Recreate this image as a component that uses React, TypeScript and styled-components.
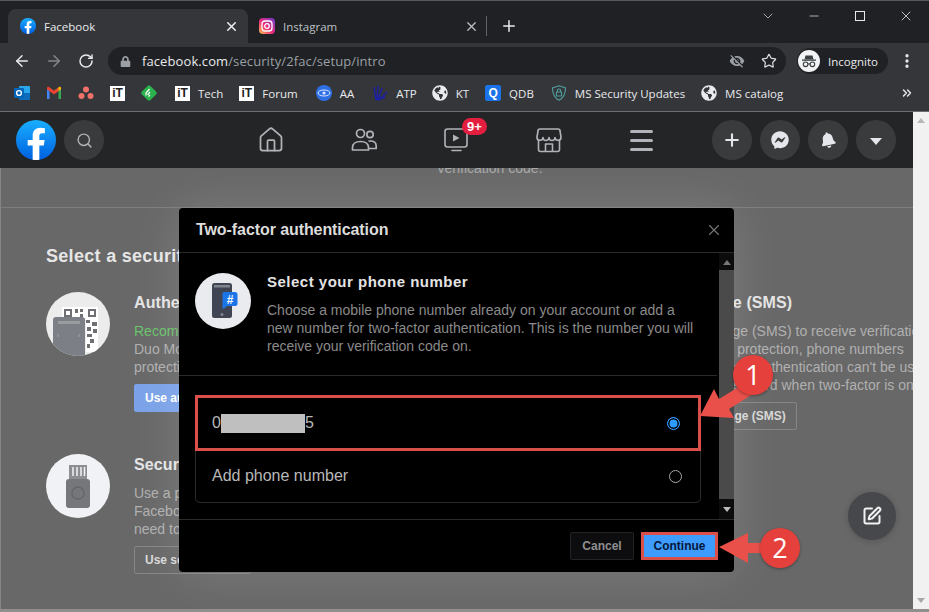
import React from 'react'
import styled, { createGlobalStyle } from 'styled-components'
import {
  ArrowLeft,
  ArrowRight,
  ChevronDown,
  ChevronsRight,
  EllipsisVertical,
  House,
  Minus,
  Plus,
  RotateCw,
  Search,
  SquarePen,
  Star,
  X,
} from 'lucide-react'
import { FaBell, FaFacebookMessenger, FaGlobeAmericas, FaLock } from 'react-icons/fa'
import { MdVisibilityOff } from 'react-icons/md'

const Global = createGlobalStyle`
  html, body {
    margin: 0;
    padding: 0;
    background: #8a8a8a;
  }
  * {
    box-sizing: border-box;
  }
`

const uiFont = `"Open Sans", "Noto Sans", sans-serif`
const pageFont = `"Liberation Sans", Arial, sans-serif`

const FbLogo: React.FC<{ size: number }> = ({ size }) => (
  <svg width={size} height={size} viewBox="0 0 36 36">
    <defs>
      <linearGradient id={`fb${size}`} x1="50%" x2="50%" y1="97%" y2="0%">
        <stop offset="0%" stopColor="#0062e0" />
        <stop offset="100%" stopColor="#19afff" />
      </linearGradient>
    </defs>
    <circle cx="18" cy="18" r="18" fill={`url(#fb${size})`} />
    <path
      fill="#fff"
      d="M25 23l.8-5H21v-3.500c0-1.400.5-2.500 2.700-2.500H26V7.400c-1.300-.2-2.700-.4-4-.4-4.100 0-7 2.500-7 7v4h-4.500v5H15v12.700c1 .2 2 .3 3 .3s2-.1 3-.3V23h4z"
    />
  </svg>
)

const InstaLogo = () => (
  <svg width="16" height="16" viewBox="0 0 16 16">
    <defs>
      <linearGradient id="ig" x1="0" y1="1" x2="1" y2="0">
        <stop offset="0%" stopColor="#fdc04e" />
        <stop offset="45%" stopColor="#ee2a7b" />
        <stop offset="100%" stopColor="#6a3bd0" />
      </linearGradient>
    </defs>
    <rect width="16" height="16" rx="4" fill="url(#ig)" />
    <rect x="3" y="3" width="10" height="10" rx="3" fill="none" stroke="#fff" strokeWidth="1.300" />
    <circle cx="8" cy="8" r="2.300" fill="none" stroke="#fff" strokeWidth="1.300" />
  </svg>
)

const OutlookIcon = () => (
  <svg width="16" height="16" viewBox="0 0 16 16">
    <rect x="5" y="1" width="11" height="14" rx="1" fill="#28a8ea" />
    <rect x="5" y="8" width="11" height="7" fill="#0f6cbd" />
    <rect x="0" y="3" width="10" height="10" rx="1" fill="#0364b8" />
    <circle cx="5" cy="8" r="2.400" fill="none" stroke="#fff" strokeWidth="1.400" />
  </svg>
)

const GmailIcon = () => (
  <svg width="16" height="16" viewBox="0 0 16 16">
    <path d="M1 14V4l2.500 2v8z" fill="#4285f4" />
    <path d="M12.500 14V6L15 4v10z" fill="#34a853" />
    <path d="M1 4.500V3c0-1 1.300-1.600 2-1l4.500 3.500v2.800z" fill="#ea4335" />
    <path d="M15 4.500V3c0-1-1.300-1.600-2-1L8.500 5.500v2.800z" fill="#fbbc04" />
    <path d="M3.500 2.400L8 6l4.500-3.600v3.500L8 9.500 3.500 5.900z" fill="#ea4335" />
  </svg>
)

const AsanaIcon = () => (
  <svg width="16" height="16" viewBox="0 0 16 16" fill="#f0706a">
    <circle cx="8" cy="4.500" r="3" />
    <circle cx="3.500" cy="11" r="3" />
    <circle cx="12.500" cy="11" r="3" />
  </svg>
)

const FeedlyIcon = () => (
  <svg width="16" height="16" viewBox="0 0 16 16">
    <rect x="2" y="2" width="12" height="12" rx="2" fill="#2bb24c" transform="rotate(45 8 8)" />
    <path d="M8.500 4L5 8v2.500M9 7L6.500 9.800M9 10L7.500 11.500" stroke="#fff" strokeWidth="1.200" fill="none" />
  </svg>
)

const EyeBadge = () => (
  <svg width="16" height="16" viewBox="0 0 16 16">
    <circle cx="8" cy="8" r="8" fill="#2f6fe4" />
    <ellipse cx="8" cy="8" rx="6" ry="3" fill="none" stroke="#d8e6ff" strokeWidth="1" />
    <circle cx="8" cy="8" r="1.600" fill="#d8e6ff" />
  </svg>
)

const AtpIcon = () => (
  <svg width="16" height="16" viewBox="0 0 16 16" stroke="#1a1fa8" strokeWidth="1.400" fill="none">
    <path d="M4 15L2 2M5 15L6 1M6 15L10 3M7 15L15 7M5 15C8 14 11 13 13 12" />
  </svg>
)

const ShieldIcon = () => (
  <svg width="16" height="16" viewBox="0 0 16 16" fill="none" stroke="#4f9f9b" strokeWidth="1.100">
    <path d="M8 .8l6.500 2.200c0 6-1.500 9.800-6.500 12.200C3 12.800 1.500 9 1.500 3z" />
    <rect x="5.400" y="7" width="5.200" height="4" rx=".6" />
    <path d="M6.400 7V5.600a1.600 1.600 0 013.200 0V7" />
  </svg>
)

const IncognitoIcon = () => (
  <svg width="22" height="22" viewBox="0 0 22 22">
    <circle cx="11" cy="11" r="11" fill="#f1f3f4" />
    <path d="M7.500 5.500h7l1 4h-9z" fill="#3c4043" />
    <rect x="4" y="9.500" width="14" height="1.300" fill="#3c4043" />
    <circle cx="7.600" cy="14.300" r="2.300" fill="none" stroke="#3c4043" strokeWidth="1.100" />
    <circle cx="14.400" cy="14.300" r="2.300" fill="none" stroke="#3c4043" strokeWidth="1.100" />
    <path d="M9.900 14h2.200" stroke="#3c4043" strokeWidth="1.100" />
  </svg>
)

const FriendsIcon = () => (
  <svg width="28" height="28" viewBox="0 0 28 28" fill="none" stroke="#b0b3b8" strokeWidth="1.700">
    <circle cx="10.500" cy="7.500" r="4" />
    <circle cx="20" cy="8.500" r="3.200" />
    <path d="M2.500 24v-2.500c0-3.500 3-6 8-6s8 2.500 8 6V24z" strokeLinejoin="round" />
    <path d="M18.500 15.200c.5-.2 1-.2 1.700-.2 3.800 0 6 2 6 5v2.500h-7.500" strokeLinejoin="round" />
  </svg>
)

const WatchIcon = () => (
  <svg width="28" height="28" viewBox="0 0 28 28" fill="none" stroke="#b0b3b8" strokeWidth="1.600">
    <rect x="3" y="3" width="22" height="18" rx="2.500" />
    <path d="M10 24.500h9" strokeLinecap="round" />
    <path d="M11 8.500l6.500 3.500-6.500 3.500z" fill="#b0b3b8" stroke="none" />
  </svg>
)

const MarketIcon = () => (
  <svg width="28" height="28" viewBox="0 0 28 28" fill="none" stroke="#b0b3b8" strokeWidth="1.600" strokeLinejoin="round">
    <path d="M5 3h18a2 2 0 012 2l1 6a3 3 0 01-6 .5 3 3 0 01-6 0 3 3 0 01-6 0 3 3 0 01-6-.5l1-6a2 2 0 012-2z" />
    <path d="M3.500 14v9.500a2 2 0 002 2h17a2 2 0 002-2V14" />
    <path d="M10.500 25.500V18h7v7.500" />
  </svg>
)

const QrIcon = () => (
  <svg width="64" height="64" viewBox="0 0 64 64">
    <defs>
      <clipPath id="qrClip">
        <circle cx="32" cy="32" r="32" />
      </clipPath>
    </defs>
    <circle cx="32" cy="32" r="32" fill="#ececec" />
    <g clipPath="url(#qrClip)">
      <rect x="16" y="15" width="36" height="11" fill="#fff" />
      <rect x="40" y="25" width="12" height="35" fill="#fff" />
      <path
        fillRule="evenodd"
        fill="#6d6f73"
        d="M18 17h8v8h-8zM20 19v4h4v-4zM42 17h8v8h-8zM44 19v4h4v-4zM29 17h3v4h-3zM34 17h3v3h-3zM34 22h3v4h-3zM40 28h4v3h-4zM46 30h5v4h-5zM41 35h4v4h-4zM47 37h4v4h-4zM41 42h5v3h-5zM44 47h4v4h-4zM41 52h3v4h-3z"
      />
      <rect x="7" y="25" width="32" height="42" rx="3" fill="#7c7f85" />
      <rect x="12" y="29" width="22" height="3" fill="#9a9ca0" />
      <path d="M12 42v3M33 42v3" stroke="#9a9ca0" strokeWidth="1.200" />
    </g>
  </svg>
)

const UsbIcon = () => (
  <svg width="64" height="64" viewBox="0 0 64 64">
    <circle cx="32" cy="32" r="32" fill="#f0f2f5" />
    <rect x="23" y="11" width="18" height="14" fill="#8c8e92" />
    <path d="M27 13v9M31 13v9M35 13v9M38.500 13v9" stroke="#f0f2f5" strokeWidth="1.500" />
    <rect x="20" y="25" width="24" height="29" rx="3" fill="#75777b" />
    <circle cx="32" cy="39" r="6" fill="none" stroke="#65676b" strokeWidth="1.500" />
  </svg>
)

const PhoneIcon = () => (
  <svg width="56" height="56" viewBox="0 0 56 56">
    <circle cx="28" cy="28" r="28" fill="#e9ebee" />
    <rect x="17" y="10" width="20" height="35" rx="2.500" fill="#3f4552" />
    <rect x="19" y="12" width="16" height="2.500" fill="#80848c" />
    <circle cx="27" cy="41.500" r="1.500" fill="#80848c" />
    <path
      d="M29 19h11a2.500 2.500 0 012.500 2.500v9a2.500 2.500 0 01-2.500 2.500H32l-3 2.500c-1 .8-1.500 0-1.500-1V20.500A1.500 1.500 0 0129 19z"
      fill="#1b74e8"
    />
    <text x="35" y="31" textAnchor="middle" fontSize="12" fontWeight="700" fontFamily={pageFont} fill="#fff">
      #
    </text>
  </svg>
)

const Window = styled.div`
  position: relative;
  width: 929px;
  height: 612px;
  overflow: hidden;
  display: flex;
  flex-direction: column;
  background: #202124;
  border-top: 1px solid #5a5a5a;
`

const TitleBar = styled.div`
  height: 42px;
  flex: none;
  display: flex;
  padding-left: 8px;
  color: #e8eaed;
  background: #202124;
`

const Tab = styled.div<{ $active?: boolean }>`
  width: 240px;
  height: 34px;
  margin-top: 8px;
  padding: 0 9px 0 ${(p) => (p.$active ? 12 : 11)}px;
  border-radius: 8px 8px 0 0;
  display: flex;
  align-items: center;
  gap: 8px;
  background: ${(p) => (p.$active ? '#35363a' : 'transparent')};
  color: ${(p) => (p.$active ? '#e8eaed' : '#bdc1c6')};
`

const TabTitle = styled.span`
  flex: 1;
  font: 11.5px ${uiFont};
`

const TabDivider = styled.div`
  width: 1px;
  height: 20px;
  margin: 15px 0 0 -2px;
  background: #5f6368;
`

const NewTab = styled.div`
  width: 44px;
  height: 34px;
  margin-top: 8px;
  display: flex;
  align-items: center;
  justify-content: center;
`

const WindowControls = styled.div`
  margin-left: auto;
  height: 29px;
  display: flex;
  color: #e8eaed;
`

const WindowButton = styled.div`
  width: 46px;
  display: flex;
  align-items: center;
  justify-content: center;
`

const MaximizeBox = styled.span`
  width: 10px;
  height: 10px;
  border: 1px solid #e8eaed;
`

const Toolbar = styled.div`
  height: 32px;
  flex: none;
  display: flex;
  align-items: flex-end;
  background: #35363a;
  padding-left: 6px;
`

const NavButton = styled.div<{ $dim?: boolean }>`
  width: 32px;
  height: 28px;
  display: flex;
  align-items: center;
  justify-content: center;
  color: ${(p) => (p.$dim ? '#85878b' : '#e8eaed')};
`

const Omnibox = styled.div`
  width: 678px;
  height: 28px;
  margin-left: 6px;
  padding: 0 9px 0 12px;
  border-radius: 14px;
  background: #202124;
  display: flex;
  align-items: center;
  color: #9aa0a6;
`

const Url = styled.span`
  margin-left: 11px;
  flex: 1;
  font: 13px ${uiFont};
  color: #9aa0a6;
  letter-spacing: 0.1px;
`

const UrlHost = styled.span`
  color: #e8eaed;
`

const TrackingOff = styled(MdVisibilityOff)`
  margin-right: 16px;
`

const ProfilePill = styled.div`
  width: 91px;
  height: 26px;
  margin: 0 0 1px 11px;
  padding-left: 1px;
  border-radius: 13px;
  background: #202124;
  display: flex;
  align-items: center;
  gap: 8px;
  font: 11.5px ${uiFont};
  color: #e8eaed;
`

const Kebab = styled.div`
  width: 20px;
  height: 28px;
  margin-left: 9px;
  display: flex;
  align-items: center;
  justify-content: center;
  color: #e8eaed;
`

const BookmarksBar = styled.div`
  height: 37px;
  flex: none;
  display: flex;
  align-items: center;
  padding: 0 6px;
  background: #35363a;
  border-bottom: 1px solid #6b6d70;
`

const Bookmark = styled.div<{ $gap?: number }>`
  display: flex;
  align-items: center;
  gap: 8px;
  padding: 0 8px;
  margin-right: ${(p) => p.$gap ?? 0}px;
  font: 11.5px ${uiFont};
  color: #e8eaed;
`

const ItBadge = styled.span`
  width: 15px;
  height: 15px;
  background: #fff;
  color: #222;
  font: 700 12px/15px ${pageFont};
  text-align: center;
`

const QBadge = styled.span`
  width: 16px;
  height: 16px;
  border-radius: 2px;
  background: #1a73e8;
  color: #fff;
  font: 700 12px/16px ${pageFont};
  text-align: center;
`

const OverflowMark = styled.div`
  margin-left: auto;
  margin-right: 9px;
  display: flex;
  color: #e8eaed;
`

const Main = styled.div`
  flex: 1;
  min-height: 0;
  display: flex;
  padding-bottom: 3px;
  background: #8f8f8f;
`

const Viewport = styled.div`
  position: relative;
  width: 913px;
  display: flex;
  flex-direction: column;
  font-family: ${pageFont};
  overflow: hidden;
`

const FbNav = styled.nav`
  height: 56px;
  flex: none;
  display: flex;
  align-items: center;
  padding-left: 16px;
  background: #242526;
`

const NavCircle = styled.div`
  width: 40px;
  height: 40px;
  border-radius: 50%;
  background: #3a3b3c;
  display: flex;
  align-items: center;
  justify-content: center;
  color: #e4e6eb;
`

const SearchCircle = styled(NavCircle)`
  margin-left: 8px;
  color: #b0b3b8;
`

const TiltedBell = styled(FaBell)`
  transform: rotate(-12deg);
`

const NavCenter = styled.div`
  display: flex;
  margin-left: 121px;
`

const NavItem = styled.div`
  position: relative;
  width: 92.5px;
  display: flex;
  align-items: center;
  justify-content: center;
  color: #b0b3b8;
`

const Badge = styled.span`
  position: absolute;
  left: 52px;
  top: -8px;
  height: 17px;
  padding: 0 5px;
  border-radius: 9px;
  background: #e41e3f;
  color: #fff;
  font: 700 13px/17px ${pageFont};
`

const Hamburger = styled.div`
  width: 23px;
  display: flex;
  flex-direction: column;
  gap: 6px;
`

const HamburgerBar = styled.span`
  height: 3px;
  border-radius: 2px;
  background: #b0b3b8;
`

const NavRight = styled.div`
  margin-left: auto;
  margin-right: 17px;
  display: flex;
  gap: 8px;
`

const CaretDown = styled.span`
  width: 0;
  height: 0;
  margin-top: 3px;
  border-left: 6px solid transparent;
  border-right: 6px solid transparent;
  border-top: 7px solid #e4e6eb;
`

const PageBody = styled.div`
  flex: 1;
  background: #686868;
  border-left: 1px solid #858585;
  overflow: hidden;
  min-height: 0;
`

const CutOffText = styled.div`
  height: 49px;
  margin-top: -9px;
  padding-left: 66px;
  text-align: center;
  font-size: 14px;
  line-height: 18px;
  color: #a8a8a8;
  border-bottom: 1px solid #7d7d7d;
`

const MethodsHeading = styled.h2`
  margin: 38px 0 26px 45px;
  font-size: 18px;
  line-height: 20px;
  font-weight: 700;
  letter-spacing: 0.3px;
  color: #e6e6e6;
`

const Methods = styled.div`
  display: grid;
  grid-template-columns: 502px 400px;
  grid-auto-rows: 162px;
  padding-left: 45px;
`

const Method = styled.div`
  display: flex;
  gap: 24px;
`

const MethodIcon = styled.div`
  width: 64px;
  height: 64px;
  flex: none;
`

const MethodText = styled.div`
  padding-top: 1px;
  display: flex;
  flex-direction: column;
  align-items: flex-start;
  white-space: nowrap;
  font-size: 14px;
  line-height: 18px;
  color: #b0b0b0;
`

const MethodTitle = styled.div`
  margin-bottom: 9px;
  font-size: 16px;
  line-height: 20px;
  font-weight: 700;
  letter-spacing: 0.1px;
  color: #e4e4e4;
`

const Recommended = styled.div`
  color: #6ac46a;
`

const MethodButton = styled.div<{ $primary?: boolean }>`
  margin-top: 8px;
  height: 28px;
  padding: 0 10px;
  border-radius: 2px;
  font-size: 12px;
  line-height: 26px;
  font-weight: 700;
  border: 1px solid ${(p) => (p.$primary ? '#7ba2e8' : '#858585')};
  background: ${(p) => (p.$primary ? '#7ba2e8' : 'transparent')};
  color: ${(p) => (p.$primary ? '#fff' : '#d8d8d8')};
`

const Modal = styled.div`
  position: absolute;
  left: 179px;
  top: 96px;
  width: 555px;
  height: 364px;
  display: flex;
  flex-direction: column;
  background: #000;
  border-radius: 4px;
  box-shadow: 0 0 50px rgba(255, 255, 255, 0.14);
`

const ModalHeader = styled.div`
  height: 45px;
  flex: none;
  padding: 0 11px 0 17px;
  display: flex;
  align-items: center;
  justify-content: space-between;
  font-size: 16px;
  font-weight: 700;
  letter-spacing: -0.08px;
  color: #dcdcdc;
  border-bottom: 1px solid #2b2b2b;
`

const CloseButton = styled.div`
  display: flex;
  color: #777;
`

const ModalScroll = styled.div`
  flex: 1;
  min-height: 0;
  display: flex;
`

const ModalContent = styled.div`
  width: 540px;
  flex: none;
`

const Intro = styled.div`
  height: 123px;
  margin-right: 2px;
  padding: 20px 0 0 16px;
  display: flex;
  gap: 16px;
  border-bottom: 1px solid #2b2b2b;
`

const IntroTitle = styled.div`
  margin: 0 0 10px;
  font-size: 15px;
  line-height: 18px;
  font-weight: 700;
  letter-spacing: 0.5px;
  color: #e4e4e4;
`

const IntroText = styled.div`
  width: 430px;
  font-size: 14px;
  line-height: 18px;
  color: #8a8a8a;
`

const Options = styled.div`
  width: 506px;
  margin: 19px 0 0 16px;
  border: 1px solid #2b2b2b;
  border-radius: 5px;
`

const Option = styled.div<{ $marked?: boolean }>`
  height: ${(p) => (p.$marked ? 56 : 52)}px;
  margin: ${(p) => (p.$marked ? '-1px' : '0')};
  padding: 0 18px 0 ${(p) => (p.$marked ? 14 : 16)}px;
  display: flex;
  align-items: center;
  justify-content: space-between;
  font-size: 16px;
  color: #b8b8b8;
  border: ${(p) => (p.$marked ? '3px solid #d9504a' : 'none')};
`

const Number = styled.span`
  display: flex;
  align-items: center;
`

const Masked = styled.span`
  width: 84px;
  height: 19px;
  background: #bfbfbf;
`

const Radio = styled.span<{ $on?: boolean }>`
  width: 13px;
  height: 13px;
  border-radius: 50%;
  border: 1.500px solid ${(p) => (p.$on ? '#2d9bff' : '#a8a8a8')};
  background: ${(p) => (p.$on ? '#2d9bff' : 'transparent')};
  box-shadow: ${(p) => (p.$on ? 'inset 0 0 0 1.5px #000' : 'none')};
`

const Track = styled.div`
  width: 15px;
  display: flex;
  flex-direction: column;
  align-items: center;
  justify-content: space-between;
  background: #0c0c0c;
  padding: 7px 0;
`

const Thumb = styled.div`
  width: 15px;
  flex: 1;
  margin: 5px 0 8px;
  background: #4a4a4a;
`

const Arrow = styled.span<{ $down?: boolean }>`
  width: 0;
  height: 0;
  border-left: 4px solid transparent;
  border-right: 4px solid transparent;
  ${(p) => (p.$down ? 'border-top: 5px solid #bbb;' : 'border-bottom: 5px solid #777;')}
`

const ScrollArrow = styled.span<{ $down?: boolean }>`
  width: 0;
  height: 0;
  border-left: 4px solid transparent;
  border-right: 4px solid transparent;
  ${(p) => (p.$down ? 'border-top: 5px solid #a8a8a8;' : 'border-bottom: 5px solid #b8b8b8;')}
`

const ModalFooter = styled.div`
  height: 53px;
  flex: none;
  padding-right: 16px;
  display: flex;
  align-items: center;
  justify-content: flex-end;
  gap: 7px;
  border-top: 1px solid #2b2b2b;
`

const CancelButton = styled.div`
  width: 64px;
  height: 28px;
  border: 1px solid #222;
  border-radius: 2px;
  background: #0d0d0f;
  text-align: center;
  font-size: 12px;
  line-height: 26px;
  font-weight: 700;
  color: #8f8f8f;
`

const ContinueButton = styled.div`
  width: 77px;
  height: 28px;
  border: 3px solid #d9504a;
  background: #3f9cff;
  text-align: center;
  font-size: 12px;
  line-height: 22px;
  font-weight: 700;
  color: #06163a;
`

const Fab = styled.div`
  position: absolute;
  left: 848px;
  top: 380px;
  width: 48px;
  height: 48px;
  border-radius: 50%;
  background: #46484b;
  box-shadow: 0 1px 6px rgba(0, 0, 0, 0.2);
  display: flex;
  align-items: center;
  justify-content: center;
  color: #f2f2f2;
`

const Scrollbar = styled.div`
  flex: 1;
  display: flex;
  flex-direction: column;
  align-items: center;
  justify-content: space-between;
  padding: 6px 0;
  background: #f1f1f1;
`

const ArrowOverlay = styled.svg`
  position: absolute;
  left: 0;
  top: 0;
`

const Callout = styled.div<{ $x: number; $y: number }>`
  position: absolute;
  left: ${(p) => p.$x - 20}px;
  top: ${(p) => p.$y - 21}px;
  width: 40px;
  height: 40px;
  border-radius: 50%;
  background: #e5403c;
  box-shadow: 0 1px 3px rgba(0, 0, 0, 0.35);
  color: #fff;
  text-align: center;
  font: 27px/40px ${uiFont};
`

const App: React.FC = () => {
  return (
    <>
      <Global />
      <Window>
        <TitleBar>
          <Tab $active>
            <FbLogo size={16} />
            <TabTitle>Facebook</TabTitle>
            <X size={15} strokeWidth={2.5} />
          </Tab>
          <Tab>
            <InstaLogo />
            <TabTitle>Instagram</TabTitle>
            <X size={15} strokeWidth={2} />
          </Tab>
          <TabDivider />
          <NewTab>
            <Plus size={18} strokeWidth={2} />
          </NewTab>
          <WindowControls>
            <WindowButton>
              <ChevronDown size={16} strokeWidth={1} />
            </WindowButton>
            <WindowButton>
              <Minus size={14} strokeWidth={1.2} />
            </WindowButton>
            <WindowButton>
              <MaximizeBox />
            </WindowButton>
            <WindowButton>
              <X size={16} strokeWidth={1.2} />
            </WindowButton>
          </WindowControls>
        </TitleBar>

        <Toolbar>
          <NavButton>
            <ArrowLeft size={18} strokeWidth={2} />
          </NavButton>
          <NavButton $dim>
            <ArrowRight size={18} strokeWidth={2} />
          </NavButton>
          <NavButton>
            <RotateCw size={16} strokeWidth={2.2} />
          </NavButton>
          <Omnibox>
            <FaLock size={11} />
            <Url>
              <UrlHost>facebook.com</UrlHost>/security/2fac/setup/intro
            </Url>
            <TrackingOff size={16} />
            <Star size={16} strokeWidth={1.8} color="#dadce0" />
          </Omnibox>
          <ProfilePill>
            <IncognitoIcon />
            Incognito
          </ProfilePill>
          <Kebab>
            <EllipsisVertical size={18} strokeWidth={2.4} />
          </Kebab>
        </Toolbar>

        <BookmarksBar>
          <Bookmark>
            <OutlookIcon />
          </Bookmark>
          <Bookmark>
            <GmailIcon />
          </Bookmark>
          <Bookmark>
            <AsanaIcon />
          </Bookmark>
          <Bookmark>
            <ItBadge>iT</ItBadge>
          </Bookmark>
          <Bookmark $gap={2}>
            <FeedlyIcon />
          </Bookmark>
          <Bookmark>
            <ItBadge>iT</ItBadge>Tech
          </Bookmark>
          <Bookmark $gap={2}>
            <ItBadge>iT</ItBadge>Forum
          </Bookmark>
          <Bookmark $gap={2}>
            <EyeBadge />
            AA
          </Bookmark>
          <Bookmark $gap={-1}>
            <AtpIcon />
            ATP
          </Bookmark>
          <Bookmark>
            <FaGlobeAmericas size={16} color="#e8eaed" />
            KT
          </Bookmark>
          <Bookmark $gap={1}>
            <QBadge>Q</QBadge>
            QDB
          </Bookmark>
          <Bookmark>
            <ShieldIcon />
            MS Security Updates
          </Bookmark>
          <Bookmark>
            <FaGlobeAmericas size={16} color="#e8eaed" />
            MS catalog
          </Bookmark>
          <OverflowMark>
            <ChevronsRight size={14} strokeWidth={2.5} />
          </OverflowMark>
        </BookmarksBar>

        <Main>
          <Viewport>
            <FbNav>
              <FbLogo size={40} />
              <SearchCircle>
                <Search size={17} strokeWidth={2} />
              </SearchCircle>
              <NavCenter>
                <NavItem>
                  <House size={28} strokeWidth={1.5} />
                </NavItem>
                <NavItem>
                  <FriendsIcon />
                </NavItem>
                <NavItem>
                  <WatchIcon />
                  <Badge>9+</Badge>
                </NavItem>
                <NavItem>
                  <MarketIcon />
                </NavItem>
                <NavItem>
                  <Hamburger>
                    <HamburgerBar />
                    <HamburgerBar />
                    <HamburgerBar />
                  </Hamburger>
                </NavItem>
              </NavCenter>
              <NavRight>
                <NavCircle>
                  <Plus size={20} strokeWidth={2.5} />
                </NavCircle>
                <NavCircle>
                  <FaFacebookMessenger size={18} />
                </NavCircle>
                <NavCircle>
                  <TiltedBell size={16} />
                </NavCircle>
                <NavCircle>
                  <CaretDown />
                </NavCircle>
              </NavRight>
            </FbNav>

            <PageBody>
              <CutOffText>verification code.</CutOffText>
              <MethodsHeading>Select a security method</MethodsHeading>
              <Methods>
                <Method>
                  <MethodIcon>
                    <QrIcon />
                  </MethodIcon>
                  <MethodText>
                    <MethodTitle>Authentication app</MethodTitle>
                    <Recommended>Recommended</Recommended>
                    Duo Mobile or Google Authenticator
                    <br />
                    protection
                    <MethodButton $primary>Use authentication app</MethodButton>
                  </MethodText>
                </Method>
                <Method>
                  <MethodIcon />
                  <MethodText>
                    <MethodTitle>Text message (SMS)</MethodTitle>
                    Use text message (SMS) to receive verification
                    <br />
                    codes. For your protection, phone numbers
                    <br />
                    used for two-factor authentication can't be used
                    <br />
                    to reset your password when two-factor is on.
                    <MethodButton>Use text message (SMS)</MethodButton>
                  </MethodText>
                </Method>
                <Method>
                  <MethodIcon>
                    <UsbIcon />
                  </MethodIcon>
                  <MethodText>
                    <MethodTitle>Security key</MethodTitle>
                    Use a physical security key to help protect your
                    <br />
                    Facebook account from unauthorized access.
                    <br />
                    need to enter a code.
                    <MethodButton>Use security key</MethodButton>
                  </MethodText>
                </Method>
              </Methods>
            </PageBody>

            <Modal>
              <ModalHeader>
                Two-factor authentication
                <CloseButton>
                  <X size={18} strokeWidth={1.5} />
                </CloseButton>
              </ModalHeader>
              <ModalScroll>
                <ModalContent>
                  <Intro>
                    <PhoneIcon />
                    <div>
                      <IntroTitle>Select your phone number</IntroTitle>
                      <IntroText>
                        Choose a mobile phone number already on your account or add a new number for two-factor
                        authentication. This is the number you will receive your verification code on.
                      </IntroText>
                    </div>
                  </Intro>
                  <Options>
                    <Option $marked>
                      <Number>
                        0<Masked />5
                      </Number>
                      <Radio $on />
                    </Option>
                    <Option>
                      Add phone number
                      <Radio />
                    </Option>
                  </Options>
                </ModalContent>
                <Track>
                  <Arrow />
                  <Thumb />
                  <Arrow $down />
                </Track>
              </ModalScroll>
              <ModalFooter>
                <CancelButton>Cancel</CancelButton>
                <ContinueButton>Continue</ContinueButton>
              </ModalFooter>
            </Modal>

            <Fab>
              <SquarePen size={20} strokeWidth={2.4} />
            </Fab>
          </Viewport>
          <Scrollbar>
            <ScrollArrow />
            <ScrollArrow $down />
          </Scrollbar>
        </Main>

        <ArrowOverlay width={929} height={612} viewBox="0 0 929 612">
          <path d="M700 415l14-27 5 10 26-16 8 11-24 15 5 9z" fill="#e9504a" />
          <path d="M719 546l29-14v10h20v10h-20v10z" fill="#e9504a" />
        </ArrowOverlay>
        <Callout $x={753} $y={375}>
          1
        </Callout>
        <Callout $x={780} $y={548}>
          2
        </Callout>
      </Window>
    </>
  )
}

export default App
